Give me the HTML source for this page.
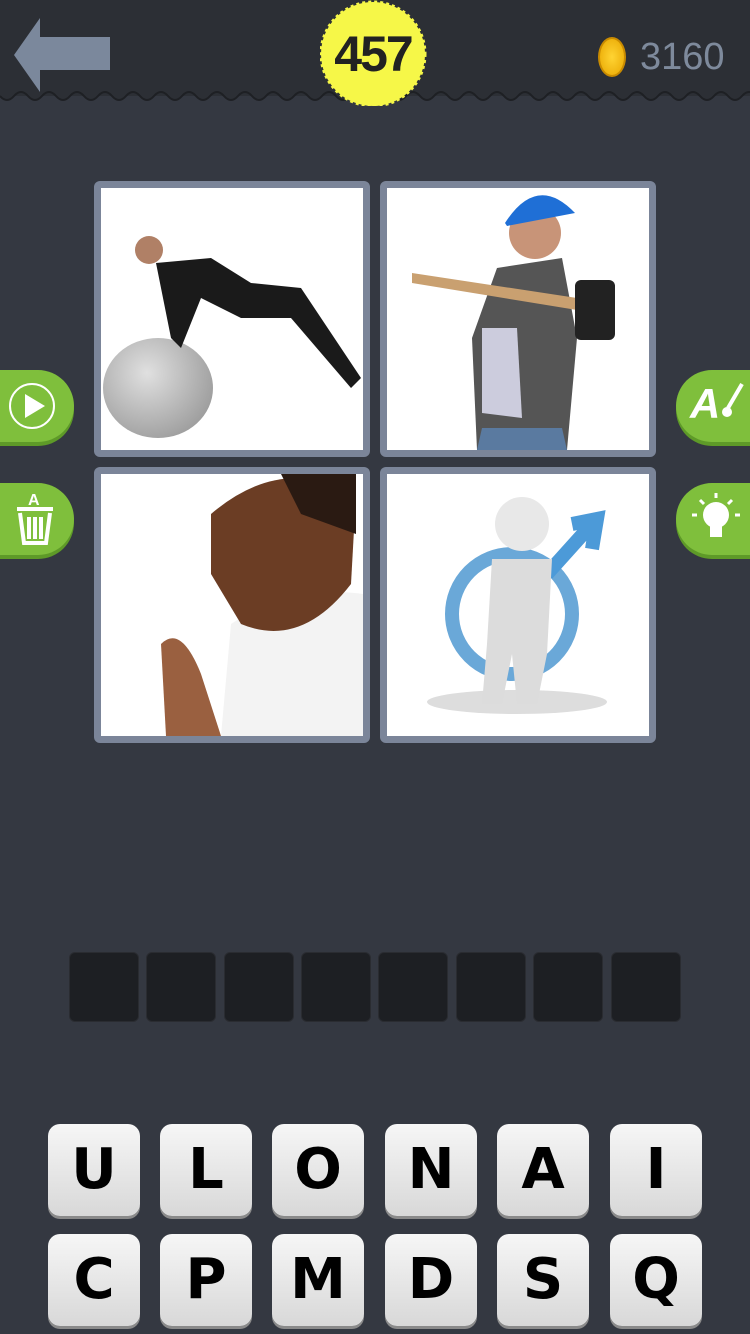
<!DOCTYPE html>
<html><head><meta charset="utf-8"><style>
*{margin:0;padding:0;box-sizing:border-box}
body{width:750px;height:1334px;background:#343841;position:relative;overflow:hidden;font-family:"Liberation Sans",sans-serif}
.hdr{position:absolute;left:0;top:0;width:750px;height:96px;background:#2c2f35}
.pic{position:absolute;width:276px;height:276px;background:#7b8599;border-radius:6px;padding:7px}
.pic .in{width:100%;height:100%;background:#fff;position:relative;overflow:hidden}
.box{position:absolute;top:952px;width:70px;height:70px;background:#1d1f23;border-radius:6px;border:1px solid #2a2c31}
.key{position:absolute;width:92px;height:92px;border-radius:12px;background:linear-gradient(#f6f6f6,#d8d8d8);box-shadow:0 3px 0 #8a8a8a;font-family:"DejaVu Sans",sans-serif;font-weight:bold;font-size:56px;color:#000;text-align:center;line-height:92px}
.gl{position:absolute;width:74px;height:72px;background:#7fbf3c;box-shadow:0 4px 0 #5e9a28}
.l{left:0;border-radius:0 36px 36px 0}.r{left:676px;border-radius:36px 0 0 36px}
</style></head><body>
<div class="hdr"></div>
<svg style="position:absolute;left:0;top:90px" width="750" height="16"><path d="M0 6 Q7 14 14 6 T28 6 T42 6 T56 6 T70 6 T84 6 T98 6 T112 6 T126 6 T140 6 T154 6 T168 6 T182 6 T196 6 T210 6 T224 6 T238 6 T252 6 T266 6 T280 6 T294 6 T308 6 T322 6 T336 6 T350 6 T364 6 T378 6 T392 6 T406 6 T420 6 T434 6 T448 6 T462 6 T476 6 T490 6 T504 6 T518 6 T532 6 T546 6 T560 6 T574 6 T588 6 T602 6 T616 6 T630 6 T644 6 T658 6 T672 6 T686 6 T700 6 T714 6 T728 6 T742 6 T756 6" stroke="#1e2024" stroke-width="2" fill="#2c2f35"/></svg>
<svg style="position:absolute;left:14px;top:18px" width="100" height="76"><polygon points="26,0 26,19 96,19 96,52 26,52 26,74 0,37" fill="#7b889c"/></svg>
<svg style="position:absolute;left:320px;top:0" width="110" height="106"><circle cx="53" cy="54" r="52" fill="#f6f748" stroke="#f6f748" stroke-width="3" stroke-dasharray="3 3"/></svg>
<div style="position:absolute;left:320px;top:25px;width:106px;text-align:center;font-size:50px;font-weight:bold;color:#222;letter-spacing:-2px">457</div>
<div style="position:absolute;left:598px;top:37px;width:28px;height:40px;border-radius:50%;background:radial-gradient(#ffd433,#e8a600);border:2px solid #c98b00"></div>
<div style="position:absolute;left:640px;top:36px;font-size:38px;color:#7e8a9c">3160</div>

<div class="pic" style="left:94px;top:181px"><div class="in">
<div style="position:absolute;left:2px;top:150px;width:110px;height:100px;border-radius:50%;background:radial-gradient(circle at 40% 35%,#e0e0e0,#8a8a8a)"></div>
<svg style="position:absolute;left:0;top:0" width="262" height="262"><circle cx="48" cy="62" r="14" fill="#b08066"/><path d="M55 75 L110 70 L150 95 L200 100 L260 190 L250 200 L190 130 L140 130 L100 110 L80 160 L70 150 Z" fill="#1a1a1a"/></svg>
</div></div>
<div class="pic" style="left:380px;top:181px"><div class="in">
<svg width="262" height="262"><path d="M90 262 L85 150 L110 80 L175 70 L190 150 L180 262 Z" fill="#555"/><path d="M95 140 L130 140 L135 230 L95 225 Z" fill="#ccd"/><circle cx="148" cy="45" r="26" fill="#c89478"/><path d="M118 35 Q150 -15 188 25 L120 38 Z" fill="#1f6fd6"/><path d="M25 85 L190 110 L190 122 L25 95 Z" fill="#c9a070"/><rect x="188" y="92" width="40" height="60" rx="6" fill="#222"/><path d="M90 262 L180 262 L175 240 L95 240Z" fill="#5a7aa0"/></svg>
</div></div>
<div class="pic" style="left:94px;top:467px"><div class="in">
<svg width="262" height="262"><path d="M120 262 L130 150 Q190 110 262 120 L262 262 Z" fill="#f3f3f3"/><path d="M110 40 Q180 -20 255 20 L250 110 Q200 175 140 150 L110 100 Z" fill="#6b3d24"/><path d="M180 0 L255 0 L255 60 L200 40 Z" fill="#2a1a12"/><path d="M60 170 Q80 150 100 200 L120 262 L65 262 Z" fill="#9a6040"/></svg>
</div></div>
<div class="pic" style="left:380px;top:467px"><div class="in">
<svg width="262" height="262"><ellipse cx="130" cy="228" rx="90" ry="12" fill="#ddd"/><circle cx="125" cy="140" r="60" fill="none" stroke="#6aa8d8" stroke-width="14"/><path d="M160 100 L205 50 M185 50 L210 45 L205 75" stroke="#4c9ad8" stroke-width="14" fill="none"/><circle cx="135" cy="50" r="27" fill="#e8e8e8"/><path d="M105 85 L165 85 L160 180 L150 230 L130 230 L125 180 L115 230 L95 230 L100 170 Z" fill="#dcdcdc"/></svg>
</div></div>

<div class="gl l" style="top:370px"><svg style="position:absolute;left:8px;top:12px" width="48" height="48"><circle cx="24" cy="24" r="22" fill="none" stroke="#fff" stroke-width="2"/><polygon points="17,12 17,36 37,24" fill="#fff"/></svg></div>
<div class="gl l" style="top:483px"><svg style="position:absolute;left:12px;top:4px" width="46" height="58"><text x="16" y="18" font-size="16" font-weight="bold" fill="#fff" font-family="Liberation Sans">A</text><path d="M5 22 L41 22 M8 26 L12 56 L34 56 L38 26 M17 30 L17 52 M23 30 L23 52 M29 30 L29 52" stroke="#fff" stroke-width="4" fill="none"/></svg></div>
<div class="gl r" style="top:370px"><div style="position:absolute;left:14px;top:10px;font-size:42px;font-weight:bold;color:#fff;font-style:italic">A</div><svg style="position:absolute;left:44px;top:12px" width="26" height="40"><path d="M22 2 L8 26" stroke="#fff" stroke-width="4"/><circle cx="7" cy="30" r="5" fill="#fff"/></svg></div>
<div class="gl r" style="top:483px"><svg style="position:absolute;left:14px;top:8px" width="52" height="56"><circle cx="26" cy="24" r="13" fill="#fff"/><rect x="20" y="34" width="12" height="12" fill="#fff"/><path d="M26 2 V7 M10 9 L14 13 M42 9 L38 13 M2 24 H7 M45 24 H50" stroke="#fff" stroke-width="3"/></svg></div>

<div class="box" style="left:69px"></div><div class="box" style="left:146px"></div><div class="box" style="left:224px"></div><div class="box" style="left:301px"></div><div class="box" style="left:378px"></div><div class="box" style="left:456px"></div><div class="box" style="left:533px"></div><div class="box" style="left:611px"></div>

<div class="key" style="left:48px;top:1124px">U</div><div class="key" style="left:160px;top:1124px">L</div><div class="key" style="left:272px;top:1124px">O</div><div class="key" style="left:385px;top:1124px">N</div><div class="key" style="left:497px;top:1124px">A</div><div class="key" style="left:610px;top:1124px">I</div>
<div class="key" style="left:48px;top:1234px">C</div><div class="key" style="left:160px;top:1234px">P</div><div class="key" style="left:272px;top:1234px">M</div><div class="key" style="left:385px;top:1234px">D</div><div class="key" style="left:497px;top:1234px">S</div><div class="key" style="left:610px;top:1234px">Q</div>
</body></html>
